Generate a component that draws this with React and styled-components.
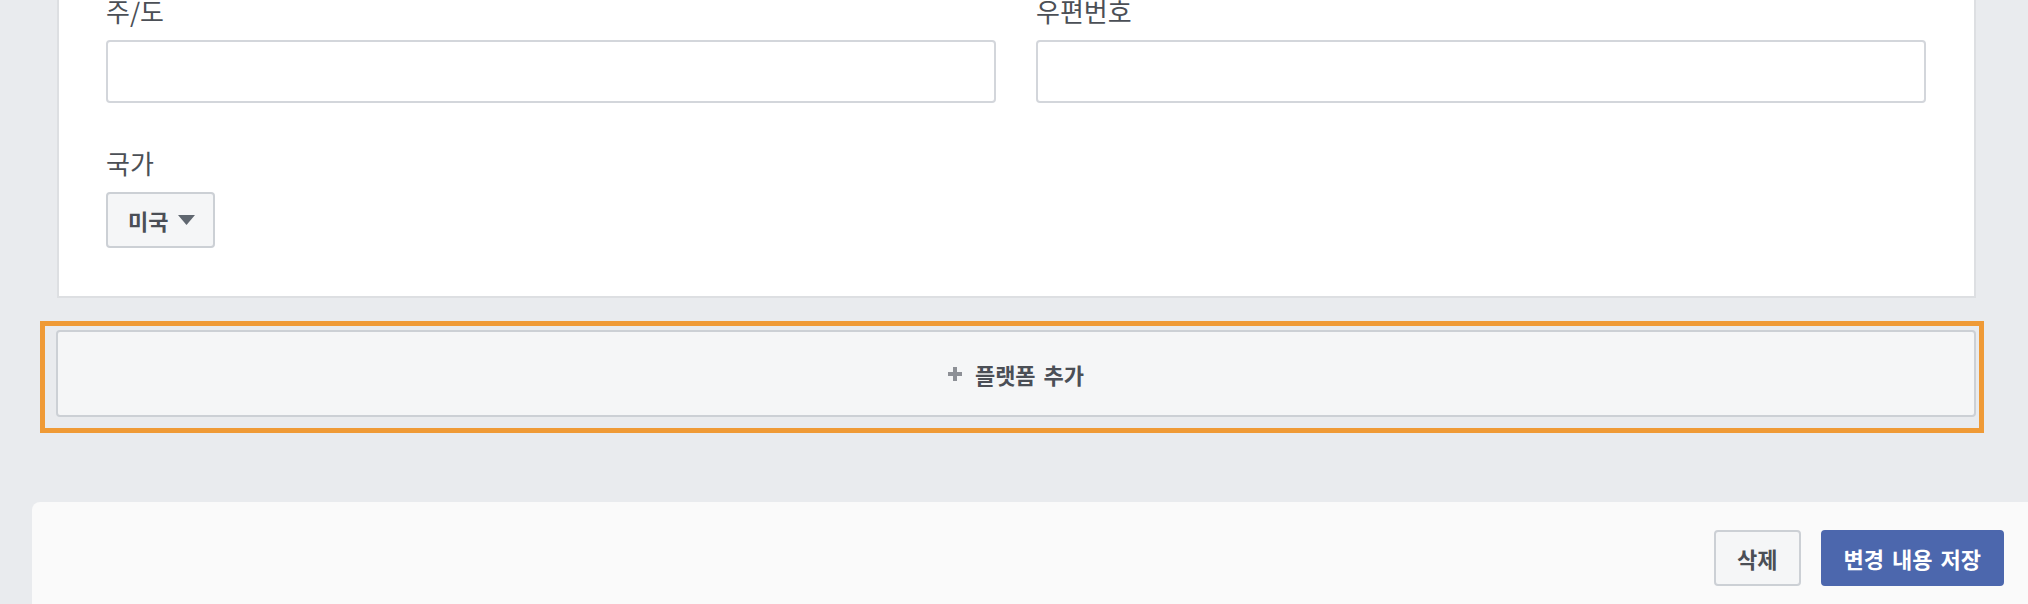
import styled, { createGlobalStyle } from "styled-components";

const GlobalStyle = createGlobalStyle`
  body {
    margin: 0;
    background: #e9ebee;
    font-family: "Noto Sans CJK KR", "Noto Sans", sans-serif;
    overflow: hidden;
  }
`;

const StyledPage = styled.div`
  width: 2028px;
  height: 604px;
  overflow: hidden;
`;

const StyledCard = styled.div`
  box-sizing: border-box;
  margin-left: 57px;
  width: 1919px;
  background: #fff;
  border: 2px solid #dddfe2;
  border-top: 0;
  padding: 0 48px 48px 47px;
`;

const StyledRow = styled.div`
  display: grid;
  grid-template-columns: 1fr 1fr;
  column-gap: 40px;
`;

const StyledField = styled.div`
  margin-top: ${(p) => p.$top || 0}px;
`;

const StyledLabel = styled.label`
  display: block;
  font-size: 26px;
  line-height: 22px;
  color: #4b4f56;
  margin-bottom: 18px;
`;

const StyledInput = styled.input`
  display: block;
  box-sizing: border-box;
  width: 100%;
  height: 63px;
  border: 2px solid #d3d6db;
  border-radius: 4px;
  background: #fff;
  outline: none;
`;

const StyledSelect = styled.button`
  display: flex;
  align-items: center;
  gap: 10px;
  box-sizing: border-box;
  height: 56px;
  width: 109px;
  padding: 0 0 0 20px;
  background: #f5f6f7;
  border: 2px solid #ccd0d5;
  border-radius: 4px;
  font-family: inherit;
  font-weight: 700;
  font-size: 22px;
  line-height: 1;
  color: #4b4f56;
`;

const StyledHighlight = styled.div`
  box-sizing: border-box;
  margin: 23px 0 0 40px;
  width: 1944px;
  border: 5px solid #ef9a36;
  padding: 4px 3px 11px 11px;
`;

const StyledAddButton = styled.button`
  display: flex;
  align-items: center;
  justify-content: center;
  gap: 13px;
  box-sizing: border-box;
  width: 100%;
  height: 87px;
  background: #f5f6f7;
  border: 2px solid #ccd0d5;
  border-radius: 4px;
  font-family: inherit;
  font-weight: 700;
  font-size: 22px;
  word-spacing: 3px;
  line-height: 1;
  color: #4b4f56;
`;

const StyledFooter = styled.div`
  display: flex;
  justify-content: flex-end;
  align-items: flex-start;
  gap: 20px;
  margin: 69px 0 0 32px;
  height: 140px;
  padding: 28px 24px 0 0;
  border-top-left-radius: 8px;
  background:
    radial-gradient(ellipse 1000px 90px at 0 100%, rgba(0, 0, 0, 0.07), rgba(0, 0, 0, 0) 70%),
    #fafafa;
`;

const StyledButton = styled.button`
  box-sizing: border-box;
  height: 56px;
  padding: 0 21px;
  border-radius: 4px;
  border: 2px solid ${(p) => (p.$primary ? "#4c67ad" : "#ccd0d5")};
  background: ${(p) => (p.$primary ? "#4c67ad" : "#f5f6f7")};
  color: ${(p) => (p.$primary ? "#fff" : "#4b4f56")};
  font-family: inherit;
  font-weight: 700;
  font-size: 22px;
  word-spacing: 3px;
  line-height: 1;
`;

const PlusIcon = () => (
  <svg width="14" height="14" viewBox="0 0 14 14">
    <rect x="5" y="0" width="4" height="14" fill="#8d9096" />
    <rect x="0" y="5" width="14" height="4" fill="#8d9096" />
  </svg>
);

const CaretIcon = () => (
  <svg width="17" height="10" viewBox="0 0 17 10">
    <polygon points="0,0 17,0 8.5,10" fill="#606770" />
  </svg>
);

const App = () => {
  return (
    <StyledPage>
      <GlobalStyle />
      <StyledCard>
        <StyledRow>
          <StyledField>
            <StyledLabel>주/도</StyledLabel>
            <StyledInput />
          </StyledField>
          <StyledField>
            <StyledLabel>우편번호</StyledLabel>
            <StyledInput />
          </StyledField>
        </StyledRow>
        <StyledField $top={49}>
          <StyledLabel>국가</StyledLabel>
          <StyledSelect>
            미국
            <CaretIcon />
          </StyledSelect>
        </StyledField>
      </StyledCard>

      <StyledHighlight>
        <StyledAddButton>
          <PlusIcon />
          플랫폼 추가
        </StyledAddButton>
      </StyledHighlight>

      <StyledFooter>
        <StyledButton>삭제</StyledButton>
        <StyledButton $primary>변경 내용 저장</StyledButton>
      </StyledFooter>
    </StyledPage>
  );
};

export default App;
